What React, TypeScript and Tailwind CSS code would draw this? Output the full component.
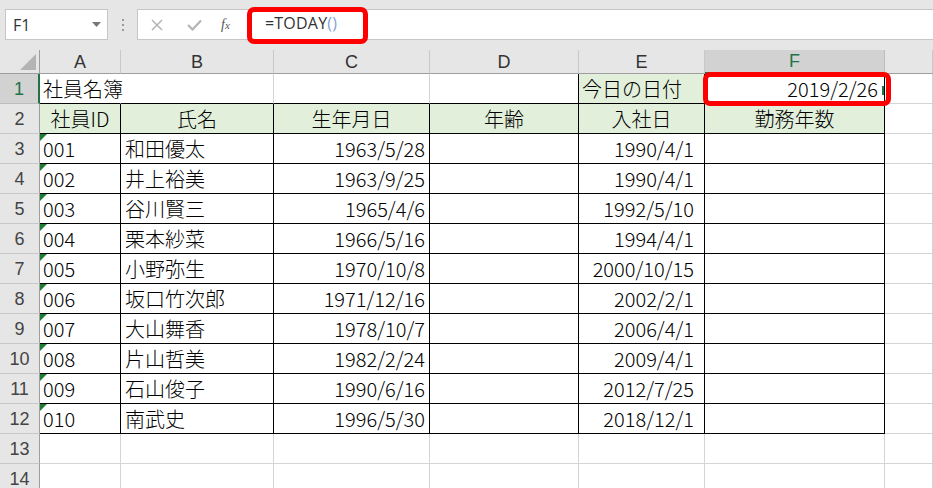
import React from "react";

const data = [
  ["001", "和田優太", "1963/5/28", "1990/4/1"],
  ["002", "井上裕美", "1963/9/25", "1990/4/1"],
  ["003", "谷川賢三", "1965/4/6", "1992/5/10"],
  ["004", "栗本紗菜", "1966/5/16", "1994/4/1"],
  ["005", "小野弥生", "1970/10/8", "2000/10/15"],
  ["006", "坂口竹次郎", "1971/12/16", "2002/2/1"],
  ["007", "大山舞香", "1978/10/7", "2006/4/1"],
  ["008", "片山哲美", "1982/2/24", "2009/4/1"],
  ["009", "石山俊子", "1990/6/16", "2012/7/25"],
  ["010", "南武史", "1996/5/30", "2018/12/1"],
];

const jp = "font-['Noto_Sans_CJK_JP','Noto_Sans',sans-serif]";

const black = "border-r border-b border-r-black border-b-black";
const grayBlack = "border-r border-b border-r-[#d4d4d4] border-b-black";
const gray = "border-r border-b border-r-[#d4d4d4] border-b-[#d4d4d4]";

function RowHead({ n, active }: { n: number; active?: boolean }) {
  return (
    <div
      className={
        active
          ? "h-[30px] flex items-center justify-center bg-[#d2d2d2] text-[#217346] border-b border-b-[#bdbdbd] border-r-2 border-r-[#217346] text-[18px] font-['Liberation_Sans',sans-serif]"
          : "h-[30px] flex items-center justify-center bg-[#e6e6e6] text-[#444] border-b border-b-[#c8c8c8] border-r border-r-[#9e9e9e] text-[18px] font-['Liberation_Sans',sans-serif]"
      }
    >
      {n}
    </div>
  );
}

function GreenTick() {
  return (
    <svg className="absolute left-0 top-0" width="7" height="7" viewBox="0 0 7 7">
      <polygon points="0,0 7,0 0,7" fill="#1e7b34" />
    </svg>
  );
}

export default function App() {
  return (
    <div className="w-[933px] h-[488px] overflow-hidden bg-white relative">
      {/* formula bar */}
      <div className="h-[50px] bg-[#e6e6e6] flex items-start pt-[9px] pl-[5px]">
        <div className="w-[103px] h-[31px] bg-white border border-[#c6c6c6] flex items-center justify-between pl-[7px] pr-[6px] text-[16px] text-[#333] font-['Open_Sans',sans-serif]">
          <span>F1</span>
          <svg width="9" height="5" viewBox="0 0 9 5">
            <polygon points="0,0 9,0 4.5,5" fill="#777" />
          </svg>
        </div>
        <div className="w-[29px] h-[31px] flex flex-col items-center justify-center gap-[3px]">
          <div className="w-[2px] h-[2px] bg-[#9a9a9a]" />
          <div className="w-[2px] h-[2px] bg-[#9a9a9a]" />
          <div className="w-[2px] h-[2px] bg-[#9a9a9a]" />
        </div>
        <div className="flex-1 h-[31px] bg-white border border-[#c6c6c6] border-r-0 flex items-center">
          <div className="w-[108px] h-full flex items-center">
            <svg className="ml-[13px]" width="12" height="12" viewBox="0 0 12 12">
              <path d="M1 1 L11 11 M11 1 L1 11" stroke="#b4b4b4" strokeWidth="1.5" />
            </svg>
            <svg className="ml-[24px]" width="15" height="12" viewBox="0 0 15 12">
              <path d="M1 6 L5.5 10.5 L14 1.5" stroke="#b4b4b4" strokeWidth="2.2" fill="none" />
            </svg>
            <span className="ml-[19px] text-[14px] italic text-[#555] font-['Liberation_Serif',serif]">
              f<span className="text-[11px]">x</span>
            </span>
          </div>
          <div className="pl-[19px] -mt-[3px] text-[16px] text-[#333] font-['Open_Sans',sans-serif] tracking-[0.2px]">
            =TODAY<span className="text-[#7ea3d4]">()</span>
          </div>
        </div>
      </div>

      {/* sheet */}
      <div className={`grid grid-cols-[40px_81px_153px_156px_149px_126px_180px_1fr] ${jp} text-[20px] font-light text-black leading-none`}>
        {/* column headers */}
        <div className="h-[24px] bg-[#e6e6e6] border-r border-r-[#9e9e9e] border-b border-b-[#9e9e9e] flex items-end justify-end pr-[3px] pb-[3px]">
          <svg width="16" height="16" viewBox="0 0 16 16">
            <polygon points="16,0 16,16 0,16" fill="#b4b4b4" />
          </svg>
        </div>
        {["A", "B", "C", "D", "E", "F", "G"].map((c) => (
          <div
            key={c}
            className={
              c === "F"
                ? "h-[24px] bg-[#d2d2d2] text-[#217346] border-r border-r-[#bdbdbd] border-b-2 border-b-[#217346] flex items-center justify-center text-[18px] font-['Liberation_Sans',sans-serif]"
                : "h-[24px] bg-[#e6e6e6] text-[#333] border-r border-r-[#c8c8c8] border-b border-b-[#9e9e9e] flex items-center justify-center text-[18px] font-['Liberation_Sans',sans-serif]"
            }
          >
            {c === "G" ? "" : c}
          </div>
        ))}

        {/* row 1 */}
        <RowHead n={1} active />
        <div className="h-[30px] border-r border-b border-r-transparent border-b-black flex items-center pl-[3px] whitespace-nowrap">
          社員名簿
        </div>
        <div className={`h-[30px] ${grayBlack}`} />
        <div className={`h-[30px] ${grayBlack}`} />
        <div className={`h-[30px] ${black}`} />
        <div className={`h-[30px] ${black} bg-[#e2efda] flex items-center pl-[3px]`}>今日の日付</div>
        <div className={`h-[30px] ${black} flex items-center justify-end pr-[6px] relative`}>
          2019/2/26
          <div className="absolute right-0 top-[12px] w-[2px] h-[9px] bg-[#217346]" />
        </div>
        <div className={`h-[30px] ${gray}`} />

        {/* row 2 */}
        <RowHead n={2} />
        {["社員ID", "氏名", "生年月日", "年齢", "入社日", "勤務年数"].map((h) => (
          <div key={h} className={`h-[30px] ${black} bg-[#e2efda] flex items-center justify-center`}>
            {h}
          </div>
        ))}
        <div className={`h-[30px] ${gray}`} />

        {/* data rows */}
        {data.map((r, i) => (
          <React.Fragment key={r[0]}>
            <RowHead n={i + 3} />
            <div className={`h-[30px] ${black} flex items-center pl-[3px] relative`}>
              <GreenTick />
              {r[0]}
            </div>
            <div className={`h-[30px] ${black} flex items-center pl-[4px]`}>{r[1]}</div>
            <div className={`h-[30px] ${black} flex items-center justify-end pr-[4px]`}>{r[2]}</div>
            <div className={`h-[30px] ${black}`} />
            <div className={`h-[30px] ${black} flex items-center justify-end pr-[10px]`}>{r[3]}</div>
            <div className={`h-[30px] ${black}`} />
            <div className={`h-[30px] ${gray}`} />
          </React.Fragment>
        ))}

        {/* empty rows */}
        {[13, 14].map((n) => (
          <React.Fragment key={n}>
            <RowHead n={n} />
            <div className={`h-[30px] ${gray}`} />
            <div className={`h-[30px] ${gray}`} />
            <div className={`h-[30px] ${gray}`} />
            <div className={`h-[30px] ${gray}`} />
            <div className={`h-[30px] ${gray}`} />
            <div className={`h-[30px] ${gray}`} />
            <div className={`h-[30px] ${gray}`} />
          </React.Fragment>
        ))}
      </div>

      {/* annotation boxes */}
      <div className="absolute left-[247px] top-[7px] w-[121px] h-[37px] border-[5px] border-[#ff0000] rounded-[7px]" />
      <div className="absolute left-[703px] top-[72px] w-[188px] h-[34px] border-[5px] border-[#ff0000] rounded-[7px]" />
    </div>
  );
}
